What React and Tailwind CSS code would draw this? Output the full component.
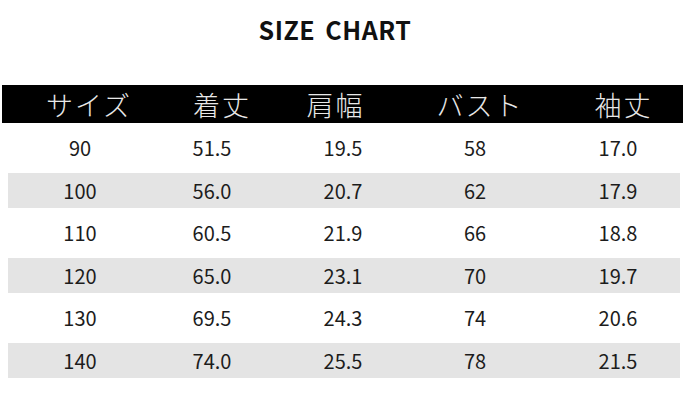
const headers = ["サイズ", "着丈", "肩幅", "バスト", "袖丈"];

const rows = [
  ["90", "51.5", "19.5", "58", "17.0"],
  ["100", "56.0", "20.7", "62", "17.9"],
  ["110", "60.5", "21.9", "66", "18.8"],
  ["120", "65.0", "23.1", "70", "19.7"],
  ["130", "69.5", "24.3", "74", "20.6"],
  ["140", "74.0", "25.5", "78", "21.5"],
];

const jp = { fontFamily: '"Noto Sans CJK JP", "Noto Sans", sans-serif' };
const jpLight = {
  fontFamily:
    '"Noto Sans CJK JP Light", "Noto Sans CJK JP DemiLight", "Noto Sans CJK JP", sans-serif',
};

const rowGrid =
  "ml-[8px] w-[672px] grid grid-cols-[144px_120px_142px_122px_1fr] items-center text-[20px] leading-none";

function App() {
  return (
    <div
      className="w-[700px] h-[402px] bg-white overflow-hidden text-[#1c1c1c]"
      style={jp}
    >
      {/* Title */}
      <div className="h-[85px] pt-[12px] flex justify-center">
        <h1 className="ml-[-30px] text-[25px] leading-[34px] font-bold tracking-[0.5px] text-[#111] [word-spacing:4px]">
          SIZE CHART
        </h1>
      </div>

      {/* Header bar */}
      <div
        className="ml-[2px] w-[681px] h-[38px] bg-black grid grid-cols-[174px_92px_135px_154px_126px] items-center text-[#e8e8e8] font-light text-[27px] leading-none"
        style={jpLight}
      >
        <span className="text-center tracking-[2px]">{headers[0]}</span>
        <span className="text-center tracking-[2px]">{headers[1]}</span>
        <span className="text-center tracking-[2px]">{headers[2]}</span>
        <span className="text-center tracking-[2px]">{headers[3]}</span>
        <span className="text-center tracking-[2px] pl-[7px]">{headers[4]}</span>
      </div>

      {/* Rows */}
      <div className="flex flex-col">
        {rows.map((row, i) => (
          <div
            key={row[0]}
            className={
              i % 2 === 1
                ? rowGrid + " h-[35px] bg-[#e4e4e4]"
                : rowGrid + " h-[50px]"
            }
          >
            {row.map((v, j) => (
              <span key={j} className={j === 4 ? "text-center pl-[20px]" : "text-center"}>
                {v}
              </span>
            ))}
          </div>
        ))}
      </div>
    </div>
  );
}

export default App;
